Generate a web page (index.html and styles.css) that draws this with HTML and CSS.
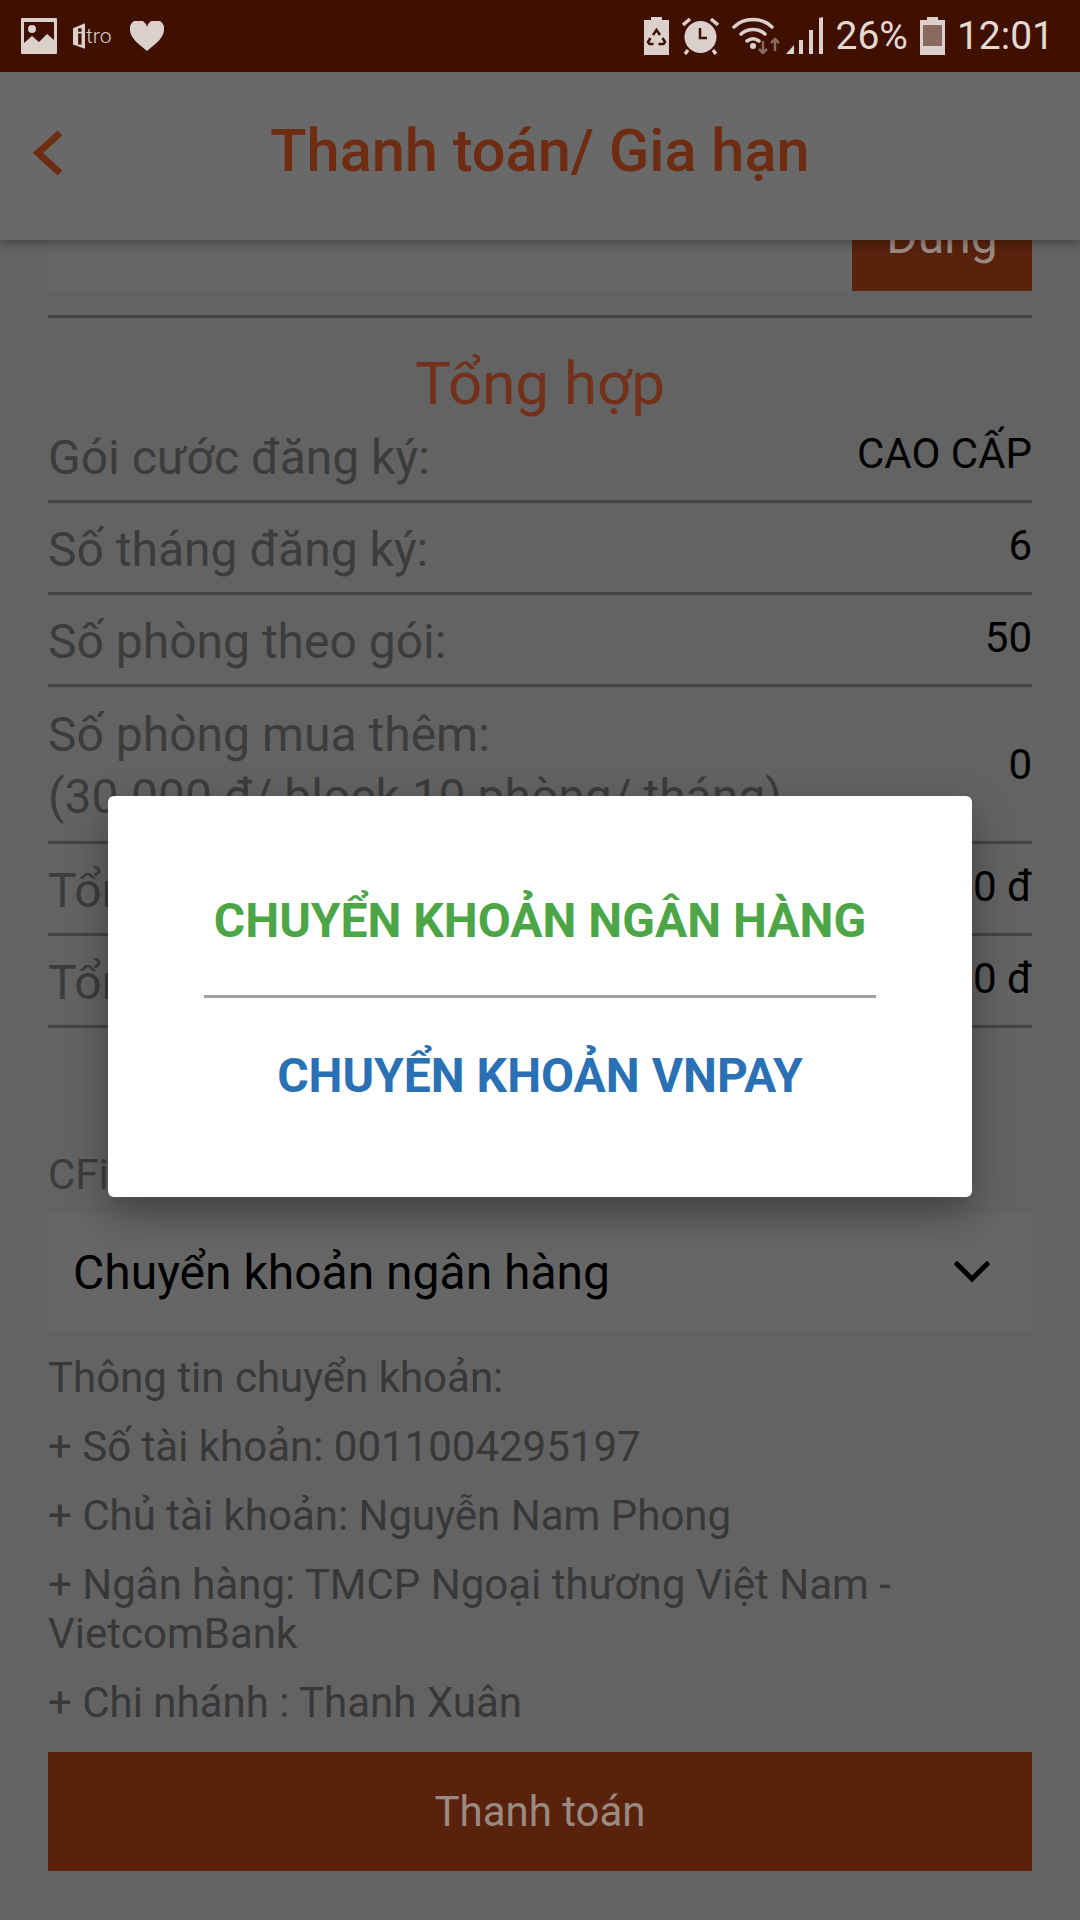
FILE: index.html
```html
<!DOCTYPE html>
<html lang="vi">
<head>
    <meta charset="UTF-8">
    <meta name="viewport" content="width=device-width, initial-scale=1.0">
    <title>Thanh toán/ Gia hạn</title>
    <link rel="stylesheet" href="styles.css">
</head>
<body>
    <!-- Status bar -->
    <div class="statusBar">
        <div class="statusLeft">
            <svg class="iconPicture" viewBox="0 0 36 36"><rect width="36" height="36" y="0" rx="1" fill="#dcd0cc"/><rect x="3" y="4" width="30" height="25" fill="#3f0f00"/><path fill="#dcd0cc" d="M3 29V25l8-7 7 6 8-8 7 6v9z"/><circle cx="11" cy="11" r="4" fill="#dcd0cc"/></svg>
            <div class="logoItro">
                <svg class="logoDoor" viewBox="0 0 14 30"><path fill="#dcd0cc" d="M0 6 14 0v30L0 25z"/><rect x="6" y="6" width="4" height="4" fill="#3f0f00"/><rect x="6" y="12" width="4" height="13" fill="#3f0f00"/></svg>
                <span class="logoText">tro</span>
            </div>
            <svg class="iconHeart" viewBox="0 0 34 30"><path fill="#dcd0cc" d="M17 30C7 22 0 16 0 9a8.500 8.500 0 0 1 17-3 8.500 8.500 0 0 1 17 3c0 7-7 13-17 21z"/></svg>
        </div>
        <div class="statusRight">
            <svg class="iconBattery" viewBox="0 0 25 38"><path fill="#dcd0cc" d="M7 0h11v3h7v35H0V3h7z"/><path fill="none" stroke="#3f0f00" stroke-width="2.500" d="M9 18l3.500-5 3.500 5M18.500 21l2.500 4-1.500 2h-5M6.500 21l-2.500 4 1.500 2h4"/></svg>
            <svg class="iconAlarm" viewBox="0 0 37 38"><circle cx="18.500" cy="20" r="16" fill="#dcd0cc"/><path fill="none" stroke="#3f0f00" stroke-width="2.500" d="M18 11v10h7"/><path fill="none" stroke="#dcd0cc" stroke-width="3.500" d="M1 8 8 2M36 8l-7-6M6 33l-3 4M31 33l3 4"/></svg>
            <svg class="iconWifi" viewBox="0 0 49 38"><path fill="none" stroke="#dcd0cc" stroke-width="3.500" stroke-linecap="round" d="M2 10C12 0 30 0 40 10M9 17c7-6 17-6 24 0M15 24c4-3 8-3 12 0"/><circle cx="21" cy="29" r="3" fill="#dcd0cc"/><path fill="none" stroke="#8a6a60" stroke-width="2.500" d="M31 24v12M27 32l4 4 4-4M43 34V22M39 26l4-4 4 4"/></svg>
            <svg class="iconSignal" viewBox="0 0 37 38"><path fill="#dcd0cc" d="M0 37 8 28v9zM13 23h4v14h-4zM23 13h4v24h-4zM33 1l4-1v37h-4z"/></svg>
            <span class="statusText">26%</span>
            <svg class="iconBattery" viewBox="0 0 25 38"><path fill="#dcd0cc" d="M7 0h11v3h7v35H0V3h7z"/><rect x="3" y="8" width="19" height="21" fill="#8a6a60"/></svg>
            <span class="statusText statusTime">12:01</span>
        </div>
    </div>

    <div class="screen">
        <!-- App header -->
        <div class="appHeader">
            <svg class="backIcon" viewBox="0 0 32 48"><path fill="none" stroke="#6e2c12" stroke-width="7" d="M28 4 6 24l22 20"/></svg>
            <h1 class="appTitle">Thanh toán/ Gia hạn</h1>
        </div>

        <!-- Scrolled page content -->
        <div class="content">
            <div class="couponRow">
                <div class="couponInput"></div>
                <div class="couponButton">Dùng</div>
            </div>

            <div class="summaryBlock">
                <h2 class="summaryTitle">Tổng hợp</h2>
                <div class="summaryRow">
                    <span class="rowLabel">Gói cước đăng ký:</span>
                    <span class="rowValue">CAO CẤP</span>
                </div>
                <div class="summaryRow">
                    <span class="rowLabel">Số tháng đăng ký:</span>
                    <span class="rowValue">6</span>
                </div>
                <div class="summaryRow">
                    <span class="rowLabel">Số phòng theo gói:</span>
                    <span class="rowValue">50</span>
                </div>
                <div class="summaryRow tallRow">
                    <span class="rowLabel">Số phòng mua thêm:<br>(30.000 đ/ block 10 phòng/ tháng)</span>
                    <span class="rowValue">0</span>
                </div>
                <div class="summaryRow">
                    <span class="rowLabel">Tổng</span>
                    <span class="rowValue">0 đ</span>
                </div>
                <div class="summaryRow">
                    <span class="rowLabel">Tổng</span>
                    <span class="rowValue">0 đ</span>
                </div>
            </div>

            <div class="methodLabel">CFi</div>
            <div class="methodSelect">
                <span>Chuyển khoản ngân hàng</span>
                <svg class="selectArrow" viewBox="0 0 36 24"><path fill="none" stroke="#000" stroke-width="5" stroke-linecap="round" d="M3 3l15 15L33 3"/></svg>
            </div>

            <div class="bankInfo">
                <p>Thông tin chuyển khoản:</p>
                <p>+ Số tài khoản: 0011004295197</p>
                <p>+ Chủ tài khoản: Nguyễn Nam Phong</p>
                <p>+ Ngân hàng: TMCP Ngoại thương Việt Nam - VietcomBank</p>
                <p>+ Chi nhánh : Thanh Xuân</p>
            </div>

            <div class="payButton">Thanh toán</div>
        </div>

        <!-- Payment method dialog -->
        <div class="dialogLayer">
            <div class="dialog">
                <div class="dialogOption optionBank">CHUYỂN KHOẢN NGÂN HÀNG</div>
                <div class="dialogDivider"></div>
                <div class="dialogOption optionVnpay">CHUYỂN KHOẢN VNPAY</div>
            </div>
        </div>
    </div>
</body>
</html>
```

FILE: styles.css
```css
/* Base styling */
html, body {
    margin: 0;
    padding: 0;
}

body {
    width: 1080px;
    height: 1920px;
    overflow: hidden;
    background: #636363;
    font-family: Roboto, sans-serif;
}

/* Status bar */
.statusBar {
    height: 72px;
    background: #3f0f00;
    display: flex;
    justify-content: space-between;
    align-items: center;
    padding: 0 26px 0 21px;
    box-sizing: border-box;
}

.statusLeft, .statusRight {
    display: flex;
    align-items: center;
}

.iconPicture {
    width: 36px;
    height: 36px;
    margin-right: 16px;
}

.logoItro {
    display: flex;
    align-items: center;
    width: 41px;
    margin-right: 16px;
}

.logoDoor {
    width: 12px;
    height: 28px;
}

.logoText {
    color: #dcd0cc;
    font-size: 21px;
    font-weight: 300;
    line-height: 28px;
    margin-left: 1px;
}

.iconHeart {
    width: 34px;
    height: 30px;
}

.iconBattery {
    width: 25px;
    height: 38px;
}

.iconAlarm {
    width: 37px;
    height: 38px;
    margin-left: 13px;
}

.iconWifi {
    width: 49px;
    height: 38px;
    margin-left: 13px;
}

.iconSignal {
    width: 37px;
    height: 38px;
    margin-left: 5px;
}

.statusText {
    color: #e6d8d2;
    font-size: 39px;
    line-height: 72px;
    margin: 0 12px 0 12px;
}

.statusTime {
    margin: 0 0 0 12px;
}

/* Area below the status bar, the dialog is centered in it */
.screen {
    position: relative;
    height: 1848px;
    overflow: hidden;
}

/* App header */
.appHeader {
    position: relative;
    z-index: 1;
    height: 168px;
    background: #696969;
    box-shadow: 0 3px 10px rgba(0, 0, 0, 0.3);
    display: flex;
    align-items: center;
    justify-content: center;
}

.backIcon {
    position: absolute;
    left: 32px;
    top: 57px;
    width: 32px;
    height: 48px;
}

.appTitle {
    margin: 0 0 10px;
    color: #6e2c12;
    font-size: 59.500px;
    font-weight: 500;
}

/* Page content */
.content {
    margin-top: -70px;
    padding: 0 48px;
}

.couponRow {
    display: flex;
    height: 121px;
}

.couponInput {
    flex: 1;
    background: #666666;
}

.couponButton {
    width: 180px;
    background: #58220d;
    color: #9a8a82;
    font-size: 48px;
    text-align: center;
    line-height: 134px;
}

.summaryBlock {
    margin-top: 24px;
    border-top: 3px solid #444444;
}

.summaryTitle {
    margin: 0;
    padding-top: 39px;
    color: #73301a;
    font-size: 60px;
    font-weight: 400;
    line-height: 54px;
    text-align: center;
}

.summaryRow {
    display: flex;
    justify-content: space-between;
    align-items: center;
    height: 89px;
    border-bottom: 3px solid #444444;
}

.tallRow {
    height: 154px;
}

.rowLabel {
    margin-top: 4px;
    color: #3c3c3c;
    font-size: 48px;
    line-height: 62px;
}

.rowValue {
    margin-bottom: 4px;
    color: #000000;
    font-size: 42px;
}

.tallRow .rowValue {
    margin-bottom: 0;
}

.methodLabel {
    margin-top: 117px;
    color: #3c3c3c;
    font-size: 42px;
    line-height: 60px;
}

.methodSelect {
    display: flex;
    justify-content: space-between;
    align-items: center;
    height: 119px;
    margin-top: 8px;
    padding: 0 42px 0 25px;
    background: #666666;
    color: #000000;
    font-size: 48px;
}

.selectArrow {
    width: 36px;
    height: 24px;
}

.bankInfo {
    margin-top: 21px;
    color: #383838;
    font-size: 42px;
    line-height: 49px;
}

.bankInfo p {
    margin: 0 0 20px;
}

.payButton {
    height: 119px;
    margin-top: 25px;
    background: #58220d;
    color: #9a8a82;
    font-size: 42px;
    line-height: 119px;
    text-align: center;
}

/* Dialog over the page */
.dialogLayer {
    position: absolute;
    left: 0;
    top: 0;
    right: 0;
    bottom: 0;
    z-index: 2;
    display: flex;
    align-items: center;
    justify-content: center;
}

.dialog {
    width: 864px;
    height: 401px;
    box-sizing: border-box;
    padding: 0 96px;
    background: #ffffff;
    border-radius: 6px;
    box-shadow: 0 16px 40px rgba(0, 0, 0, 0.35);
    display: flex;
    flex-direction: column;
}

.dialogOption {
    font-size: 48px;
    font-weight: 700;
    text-align: center;
    white-space: nowrap;
}

.optionBank {
    height: 199px;
    box-sizing: border-box;
    padding-top: 95px;
    line-height: 60px;
    color: #4ca647;
}

.optionVnpay {
    height: 156px;
    line-height: 156px;
    color: #2a70b4;
}

.dialogDivider {
    height: 3px;
    background: #a0a0a0;
}
```
